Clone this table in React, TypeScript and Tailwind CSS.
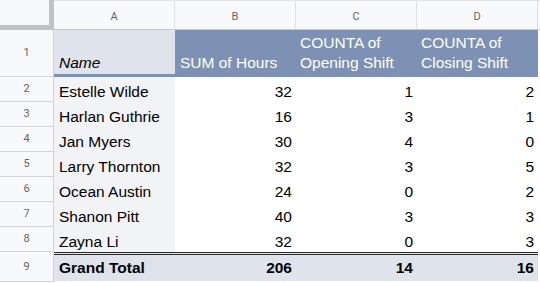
import React from "react"

const rows = [
    { n: 2, name: "Estelle Wilde", hours: 32, open: 1, close: 2 },
    { n: 3, name: "Harlan Guthrie", hours: 16, open: 3, close: 1 },
    { n: 4, name: "Jan Myers", hours: 30, open: 4, close: 0 },
    { n: 5, name: "Larry Thornton", hours: 32, open: 3, close: 5 },
    { n: 6, name: "Ocean Austin", hours: 24, open: 0, close: 2 },
    { n: 7, name: "Shanon Pitt", hours: 40, open: 3, close: 3 },
    { n: 8, name: "Zayna Li", hours: 32, open: 0, close: 3 },
]

function RowHead({ label, className = "" }: { label: string; className?: string }) {
    return (
        <div
            className={`w-[54px] shrink-0 flex items-center justify-center bg-[#f8f9fa] border-r border-b border-[#d3d3d3] text-[11px] text-[#666] font-['Roboto',sans-serif] ${className}`}
        >
            {label}
        </div>
    )
}

export default function App() {
    return (
        <div className="w-[540px] h-[283px] overflow-hidden bg-white font-['Liberation_Sans',Arial,sans-serif] text-[15.5px] leading-[20px] text-black">
            {/* Column letters */}
            <div className="flex h-[30px]">
                <div className="w-[54px] shrink-0 border-r-[5px] border-b-[5px] border-[#c2c2c2] bg-[#f8f9fa]" />
                {["A", "B", "C", "D"].map((c) => (
                    <div
                        key={c}
                        className="w-[121px] shrink-0 flex items-center justify-center pt-[3px] bg-[#f8f9fa] border-t border-r border-b border-t-[#e3e3e3] border-r-[#e1e1e1] border-b-[#c9c9c9] text-[11px] text-[#666] font-['Roboto',sans-serif]"
                    >
                        {c}
                    </div>
                ))}
                <div className="flex-1 bg-[#f8f9fa] border-t border-b border-t-[#e3e3e3] border-b-[#c9c9c9]" />
            </div>

            {/* Pivot header row */}
            <div className="flex h-[47px]">
                <RowHead label="1" />
                <div className="w-[121px] shrink-0 flex items-end pl-[5px] pb-[1px] bg-[#dee3ec] border-b-[3px] border-[#7d91b4] italic">
                    Name
                </div>
                <div className="w-[121px] shrink-0 flex items-end pl-[5px] pb-[4px] bg-[#7d91b4] text-white">
                    SUM of Hours
                </div>
                <div className="w-[121px] shrink-0 flex flex-col justify-end pl-[4px] pb-[4px] bg-[#7d91b4] text-white">
                    <span>COUNTA of</span>
                    <span>Opening Shift</span>
                </div>
                <div className="w-[121px] shrink-0 flex flex-col justify-end pl-[4px] pb-[4px] bg-[#7d91b4] text-white border-r border-[#7d91b4]">
                    <span>COUNTA of</span>
                    <span>Closing Shift</span>
                </div>
            </div>

            {/* Data rows */}
            {rows.map((r) => (
                <div key={r.n} className="flex h-[25px]">
                    <RowHead label={String(r.n)} />
                    <div className="w-[121px] shrink-0 flex items-end pl-[5px] bg-[#f2f3f5]">{r.name}</div>
                    <div className="w-[121px] shrink-0 flex items-end justify-end pr-[4px]">{r.hours}</div>
                    <div className="w-[121px] shrink-0 flex items-end justify-end pr-[4px]">{r.open}</div>
                    <div className="w-[121px] shrink-0 flex items-end justify-end pr-[4px]">{r.close}</div>
                </div>
            ))}

            {/* Grand total */}
            <div className="flex h-[30px]">
                <RowHead label="9" className="mt-[1px] h-[29px]" />
                <div className="flex h-[29px] border-t-[3px] border-double border-[#2b2b2b] bg-[#dee3ec] font-bold">
                    <div className="w-[121px] shrink-0 flex items-end pl-[5px] pb-[3px]">Grand Total</div>
                    <div className="w-[121px] shrink-0 flex items-end justify-end pr-[4px] pb-[3px]">206</div>
                    <div className="w-[121px] shrink-0 flex items-end justify-end pr-[4px] pb-[3px]">14</div>
                    <div className="w-[121px] shrink-0 flex items-end justify-end pr-[4px] pb-[3px]">16</div>
                </div>
            </div>
        </div>
    )
}
